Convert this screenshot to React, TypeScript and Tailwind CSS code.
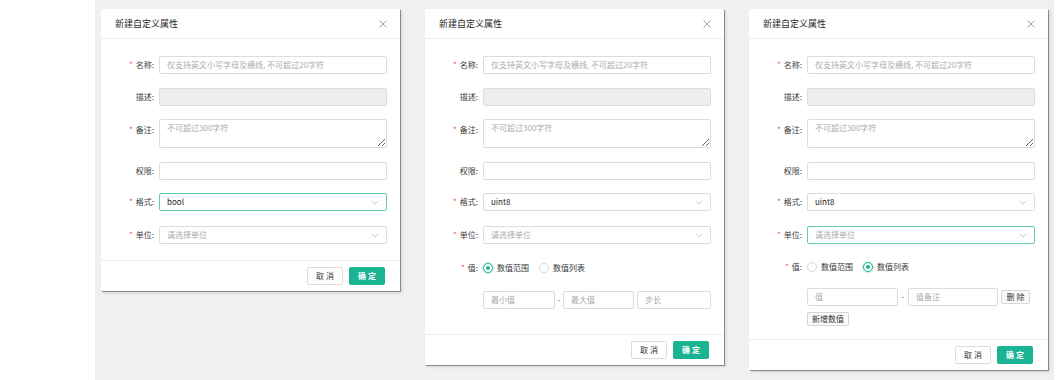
import React from "react";

const FONT = { fontFamily: '"Noto Sans CJK SC", "Noto Sans", sans-serif' };

function Label({ text, req }: { text: string; req?: boolean }) {
  return (
    <div className="w-[58px] shrink-0 text-right pr-[5px] text-[8px] leading-[10px] text-[#3a3a3a] whitespace-nowrap">
      {req && <span className="text-[#e5534b] mr-[3px]">*</span>}
      {text}:
    </div>
  );
}

function Box({
  text,
  placeholder,
  disabled,
  focus,
  select,
  className = "flex-1",
}: {
  text?: string;
  placeholder?: string;
  disabled?: boolean;
  focus?: boolean;
  select?: boolean;
  className?: string;
}) {
  return (
    <div
      className={
        className +
        " h-[18px] rounded-[2px] border flex items-center pl-[7px] pr-[7px] text-[8px] leading-[10px] " +
        (focus ? "border-[#62cbb3] " : "border-[#dcdcdc] ") +
        (disabled ? "bg-[#eeeeee] " : "bg-white ")
      }
    >
      <span className={"flex-1 whitespace-nowrap " + (text ? "text-[#222]" : "text-[#ababab]")}>
        {text ?? placeholder}
      </span>
      {select && (
        <svg width="8" height="5" viewBox="0 0 8 5" className="shrink-0">
          <path d="M0.5 0.5 L4 4 L7.5 0.5" fill="none" stroke="#bdbdbd" strokeWidth="0.8" />
        </svg>
      )}
    </div>
  );
}

function Row({ children, className = "" }: { children: React.ReactNode; className?: string }) {
  return <div className={"flex items-center " + className}>{children}</div>;
}

function Radio({ checked, label }: { checked?: boolean; label: string }) {
  return (
    <div className="flex items-center">
      {checked ? (
        <span className="w-[10px] h-[10px] rounded-full border border-[#1ab394] bg-white flex items-center justify-center shadow-[0_0_0_1.5px_rgba(26,179,148,0.15)]">
          <span className="w-[4px] h-[4px] rounded-full bg-[#1ab394]" />
        </span>
      ) : (
        <span className="w-[10px] h-[10px] rounded-full border border-[#d9d9d9] bg-white" />
      )}
      <span className="ml-[4px] text-[8px] leading-[10px] text-[#3a3a3a]">{label}</span>
    </div>
  );
}

function SmallBtn({ children, className = "" }: { children: React.ReactNode; className?: string }) {
  return (
    <div
      className={
        "h-[14px] rounded-[2px] border border-[#d6d6d6] bg-[#fafafa] flex items-center justify-center text-[8px] leading-[10px] text-[#333] " +
        className
      }
    >
      {children}
    </div>
  );
}

function Dialog({ variant }: { variant: 1 | 2 | 3 }) {
  return (
    <div className="w-[299px] bg-white shrink-0 flex flex-col shadow-[1px_1px_0_#8a8a8a,2px_2px_3px_rgba(0,0,0,0.12)]">
      <div className="h-[30px] border-b border-[#ececec] flex items-center justify-between pl-[14px] pr-[13px]">
        <span className="text-[9px] leading-[12px] text-[#2a2a2a]">新建自定义属性</span>
        <svg width="8" height="8" viewBox="0 0 8 8">
          <path d="M0.5 0.5 L7.5 7.5 M7.5 0.5 L0.5 7.5" stroke="#9a9a9a" strokeWidth="0.9" />
        </svg>
      </div>
      <div
        className={
          "pt-[17px] pr-[13px] " +
          (variant === 1 ? "pb-[16px]" : variant === 2 ? "pb-[25px]" : "pb-[13px]")
        }
      >
        <Row className="mb-[14px]">
          <Label req text="名称" />
          <Box placeholder="仅支持英文小写字母及横线, 不可超过20字符" />
        </Row>
        <Row className="mb-[13px]">
          <Label text="描述" />
          <Box disabled placeholder="" />
        </Row>
        <div className="flex items-start mb-[14px]">
          <div className="pt-[6px]">
            <Label req text="备注" />
          </div>
          <textarea
            readOnly
            placeholder="不可超过300字符"
            className="flex-1 h-[29px] rounded-[2px] border border-[#dcdcdc] bg-white px-[7px] pt-[3px] text-[8px] leading-[10px] placeholder:text-[#ababab] outline-none"
            style={FONT}
          />
        </div>
        <Row className="mb-[13px]">
          <Label text="权限" />
          <Box placeholder="" />
        </Row>
        <Row className="mb-[15px]">
          <Label req text="格式" />
          <Box select focus={variant === 1} text={variant === 1 ? "bool" : "uint8"} />
        </Row>
        <Row>
          <Label req text="单位" />
          <Box select focus={variant === 3} placeholder="请选择单位" />
        </Row>
        {variant === 2 && (
          <>
            <Row className="mt-[15px] h-[18px]">
              <Label req text="值" />
              <div className="flex items-center gap-[10px]">
                <Radio checked label="数值范围" />
                <Radio label="数值列表" />
              </div>
            </Row>
            <Row className="mt-[14px]">
              <div className="w-[58px] shrink-0" />
              <Box className="w-[72px]" placeholder="最小值" />
              <span className="w-[8px] text-center text-[8px] text-[#555]">-</span>
              <Box className="w-[71px]" placeholder="最大值" />
              <Box className="flex-1 ml-[3px]" placeholder="步长" />
            </Row>
          </>
        )}
        {variant === 3 && (
          <>
            <Row className="mt-[14px] h-[18px]">
              <Label req text="值" />
              <div className="flex items-center gap-[10px]">
                <Radio label="数值范围" />
                <Radio checked label="数值列表" />
              </div>
            </Row>
            <Row className="mt-[12px]">
              <div className="w-[58px] shrink-0" />
              <Box className="w-[91px]" placeholder="值" />
              <span className="w-[10px] text-center text-[8px] text-[#555]">-</span>
              <Box className="w-[90px]" placeholder="值备注" />
              <SmallBtn className="ml-[3px] w-[29px] tracking-[2px] pl-[2px]">删除</SmallBtn>
            </Row>
            <Row className="mt-[6px]">
              <div className="w-[58px] shrink-0" />
              <SmallBtn className="w-[42px]">新增数值</SmallBtn>
            </Row>
          </>
        )}
      </div>
      <div className="border-t border-[#ececec] flex justify-end gap-[6px] pt-[6px] pb-[6px] pr-[15px]">
        <div className="w-[36px] h-[18px] rounded-[2px] border border-[#dcdcdc] bg-white flex items-center justify-center text-[8px] leading-[10px] text-[#333] tracking-[2px] pl-[2px]">
          取消
        </div>
        <div className="w-[36px] h-[18px] rounded-[2px] bg-[#1ab394] flex items-center justify-center text-[8px] leading-[10px] font-bold text-white tracking-[2px] pl-[2px]">
          确定
        </div>
      </div>
    </div>
  );
}

export default function App() {
  return (
    <div className="flex w-[1056px] h-[380px] overflow-hidden" style={FONT}>
      <div className="w-[95px] shrink-0 bg-white" />
      <div className="flex-1 bg-[#f0f0f0] flex items-start gap-[25px] pl-[6px] pt-[9px]">
        <Dialog variant={1} />
        <Dialog variant={2} />
        <Dialog variant={3} />
      </div>
      <div className="w-[2px] shrink-0 bg-white" />
    </div>
  );
}
